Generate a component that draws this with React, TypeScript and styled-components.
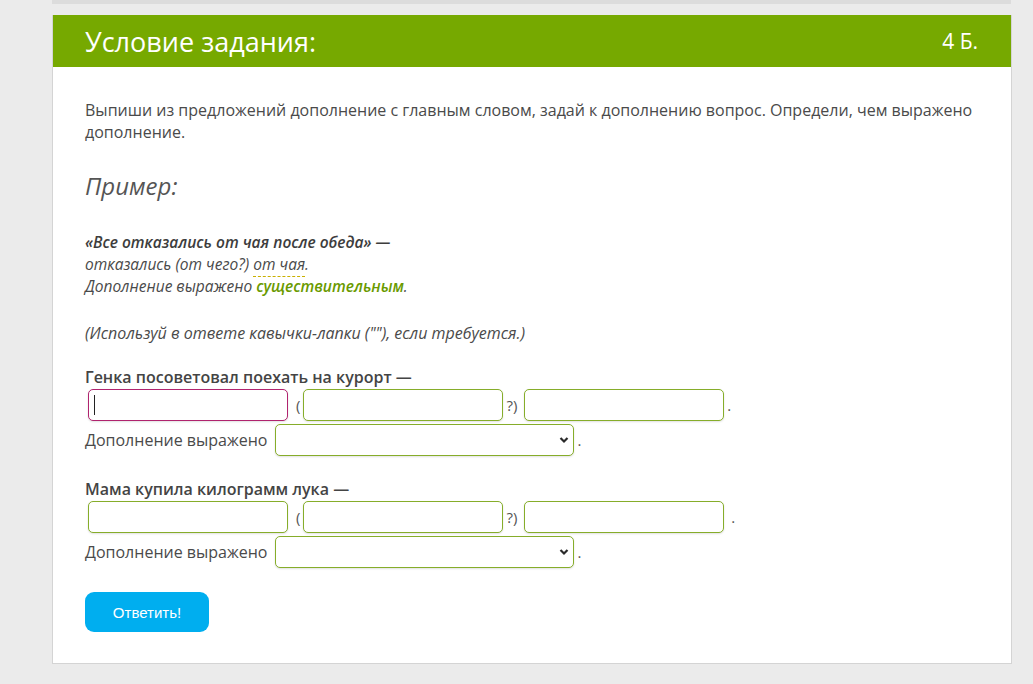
import React from "react";
import styled, { createGlobalStyle } from "styled-components";

const Global = createGlobalStyle`
  html, body { margin: 0; padding: 0; background: #ebebeb; }
  body { font-family: "Open Sans", "Noto Sans", sans-serif; color: #444; }
  * { box-sizing: border-box; }
`;

const Page = styled.div`
  width: 1033px;
  height: 684px;
  overflow: hidden;
  padding-left: 52px;
`;

const TopStrip = styled.div`
  width: 959px;
  height: 4px;
  background: #dcdcdc;
`;

const Card = styled.section`
  margin-top: 11px;
  width: 960px;
  background: #fff;
  border: 1px solid #d4d4d4;
  border-top: none;
`;

const Header = styled.header`
  display: flex;
  justify-content: space-between;
  align-items: center;
  height: 52px;
  background: #76a900;
  color: #fff;
  padding: 0 33px 0 32px;
`;

const Title = styled.h2`
  margin: 0;
  font-size: 27px;
  font-weight: 400;
`;

const Points = styled.span`
  font-size: 21px;
`;

const Body = styled.div`
  padding: 32px 32px 31px 32px;
  font-size: 16px;
  line-height: 22px;
  color: #4a4a4a;
`;

const Para = styled.p`
  margin: 0;
`;

const ExampleTitle = styled.h3`
  margin: 27px 0 29px;
  font-size: 24px;
  line-height: 32px;
  font-style: italic;
  font-weight: 400;
  color: #555;
`;

const Example = styled.div`
  font-style: italic;
  font-size: 15.5px;
  line-height: 22px;
`;

const Strong = styled.span`
  font-weight: 600;
  color: #3d3d3d;
`;

const Dashed = styled.span`
  border-bottom: 1px dashed #c9b000;
  padding-bottom: 1px;
`;

const Green = styled.span`
  font-weight: 600;
  color: #6a9a00;
`;

const Note = styled.p`
  margin: 25px 0 0;
  font-style: italic;
  font-size: 16px;
`;

const Task = styled.div`
  margin-top: 22px;
`;

const TaskLabel = styled.div`
  font-weight: 600;
  font-size: 16px;
  color: #444;
`;

const InputRow = styled.div`
  display: flex;
  align-items: center;
  margin-left: 3px;
  margin-top: 1px;
`;

const FieldWrap = styled.div`
  position: relative;
  display: flex;
`;

const Input = styled.input<{ $focused?: boolean }>`
  width: 200px;
  height: 32px;
  border-radius: 5px;
  border: 1px solid ${(p) => (p.$focused ? "#b0236e" : "#86ad2a")};
  box-shadow: 0 1px 2px rgba(0, 0, 0, 0.12);
  background: #fff;
  font: inherit;
  outline: none;
  padding: 0 6px;
`;

const Caret = styled.span`
  position: absolute;
  left: 6px;
  top: 6px;
  width: 1px;
  height: 20px;
  background: #222;
`;

const Punct = styled.span<{ $l: number; $r: number }>`
  margin-left: ${(p) => p.$l}px;
  margin-right: ${(p) => p.$r}px;
  font-size: 15px;
  color: #555;
  line-height: 32px;
`;

const SelectRow = styled.div`
  display: flex;
  align-items: center;
  margin-top: 3px;
`;

const SelectLabel = styled.span`
  margin-right: 8px;
`;

const SelectWrap = styled.div`
  position: relative;
  display: flex;
`;

const Select = styled.select`
  appearance: none;
  width: 299px;
  height: 32px;
  border-radius: 5px;
  border: 1px solid #86ad2a;
  box-shadow: 0 1px 2px rgba(0, 0, 0, 0.12);
  background: #fff;
  font: inherit;
  outline: none;
`;

const Chevron = styled.svg`
  position: absolute;
  right: 5px;
  top: 12px;
  width: 10px;
  height: 8px;
  pointer-events: none;
`;

const Button = styled.button`
  margin-top: 24px;
  width: 124px;
  height: 40px;
  border: none;
  border-radius: 9px;
  background: #00aeef;
  color: #fff;
  font-family: "Liberation Sans", Arial, sans-serif;
  font-size: 15px;
  cursor: pointer;
`;

function Exercise({ label, focused, dotGap }: { label: string; focused?: boolean; dotGap: number }) {
  return (
    <Task>
      <TaskLabel>{label}</TaskLabel>
      <InputRow>
        <FieldWrap>
          <Input $focused={focused} />
          {focused && <Caret />}
        </FieldWrap>
        <Punct $l={8} $r={3}>(</Punct>
        <Input />
        <Punct $l={3} $r={7}>?)</Punct>
        <Input />
        <Punct $l={dotGap} $r={0}>.</Punct>
      </InputRow>
      <SelectRow>
        <SelectLabel>Дополнение выражено</SelectLabel>
        <SelectWrap>
          <Select defaultValue="">
            <option value=""></option>
            <option>существительным</option>
            <option>местоимением</option>
          </Select>
          <Chevron viewBox="0 0 10 8">
            <path d="M1.5 2 L5 5.5 L8.5 2" fill="none" stroke="#2a2a2a" strokeWidth="2.2" />
          </Chevron>
        </SelectWrap>
        <Punct $l={3} $r={0}>.</Punct>
      </SelectRow>
    </Task>
  );
}

export default function App() {
  return (
    <>
      <Global />
      <Page>
        <TopStrip />
        <Card>
          <Header>
            <Title>Условие задания:</Title>
            <Points>4 Б.</Points>
          </Header>
          <Body>
            <Para>
              Выпиши из предложений дополнение с главным словом, задай к дополнению вопрос. Определи, чем выражено
              дополнение.
            </Para>
            <ExampleTitle>Пример:</ExampleTitle>
            <Example>
              <Strong>«Все отказались от чая после обеда» —</Strong>
              <br />
              отказались (от чего?) <Dashed>от чая</Dashed>.
              <br />
              Дополнение выражено <Green>существительным</Green>.
            </Example>
            <Note>(Используй в ответе кавычки-лапки (""), если требуется.)</Note>
            <Exercise label="Генка посоветовал поехать на курорт —" focused dotGap={3} />
            <Exercise label="Мама купила килограмм лука —" dotGap={7} />
            <Button>Ответить!</Button>
          </Body>
        </Card>
      </Page>
    </>
  );
}
